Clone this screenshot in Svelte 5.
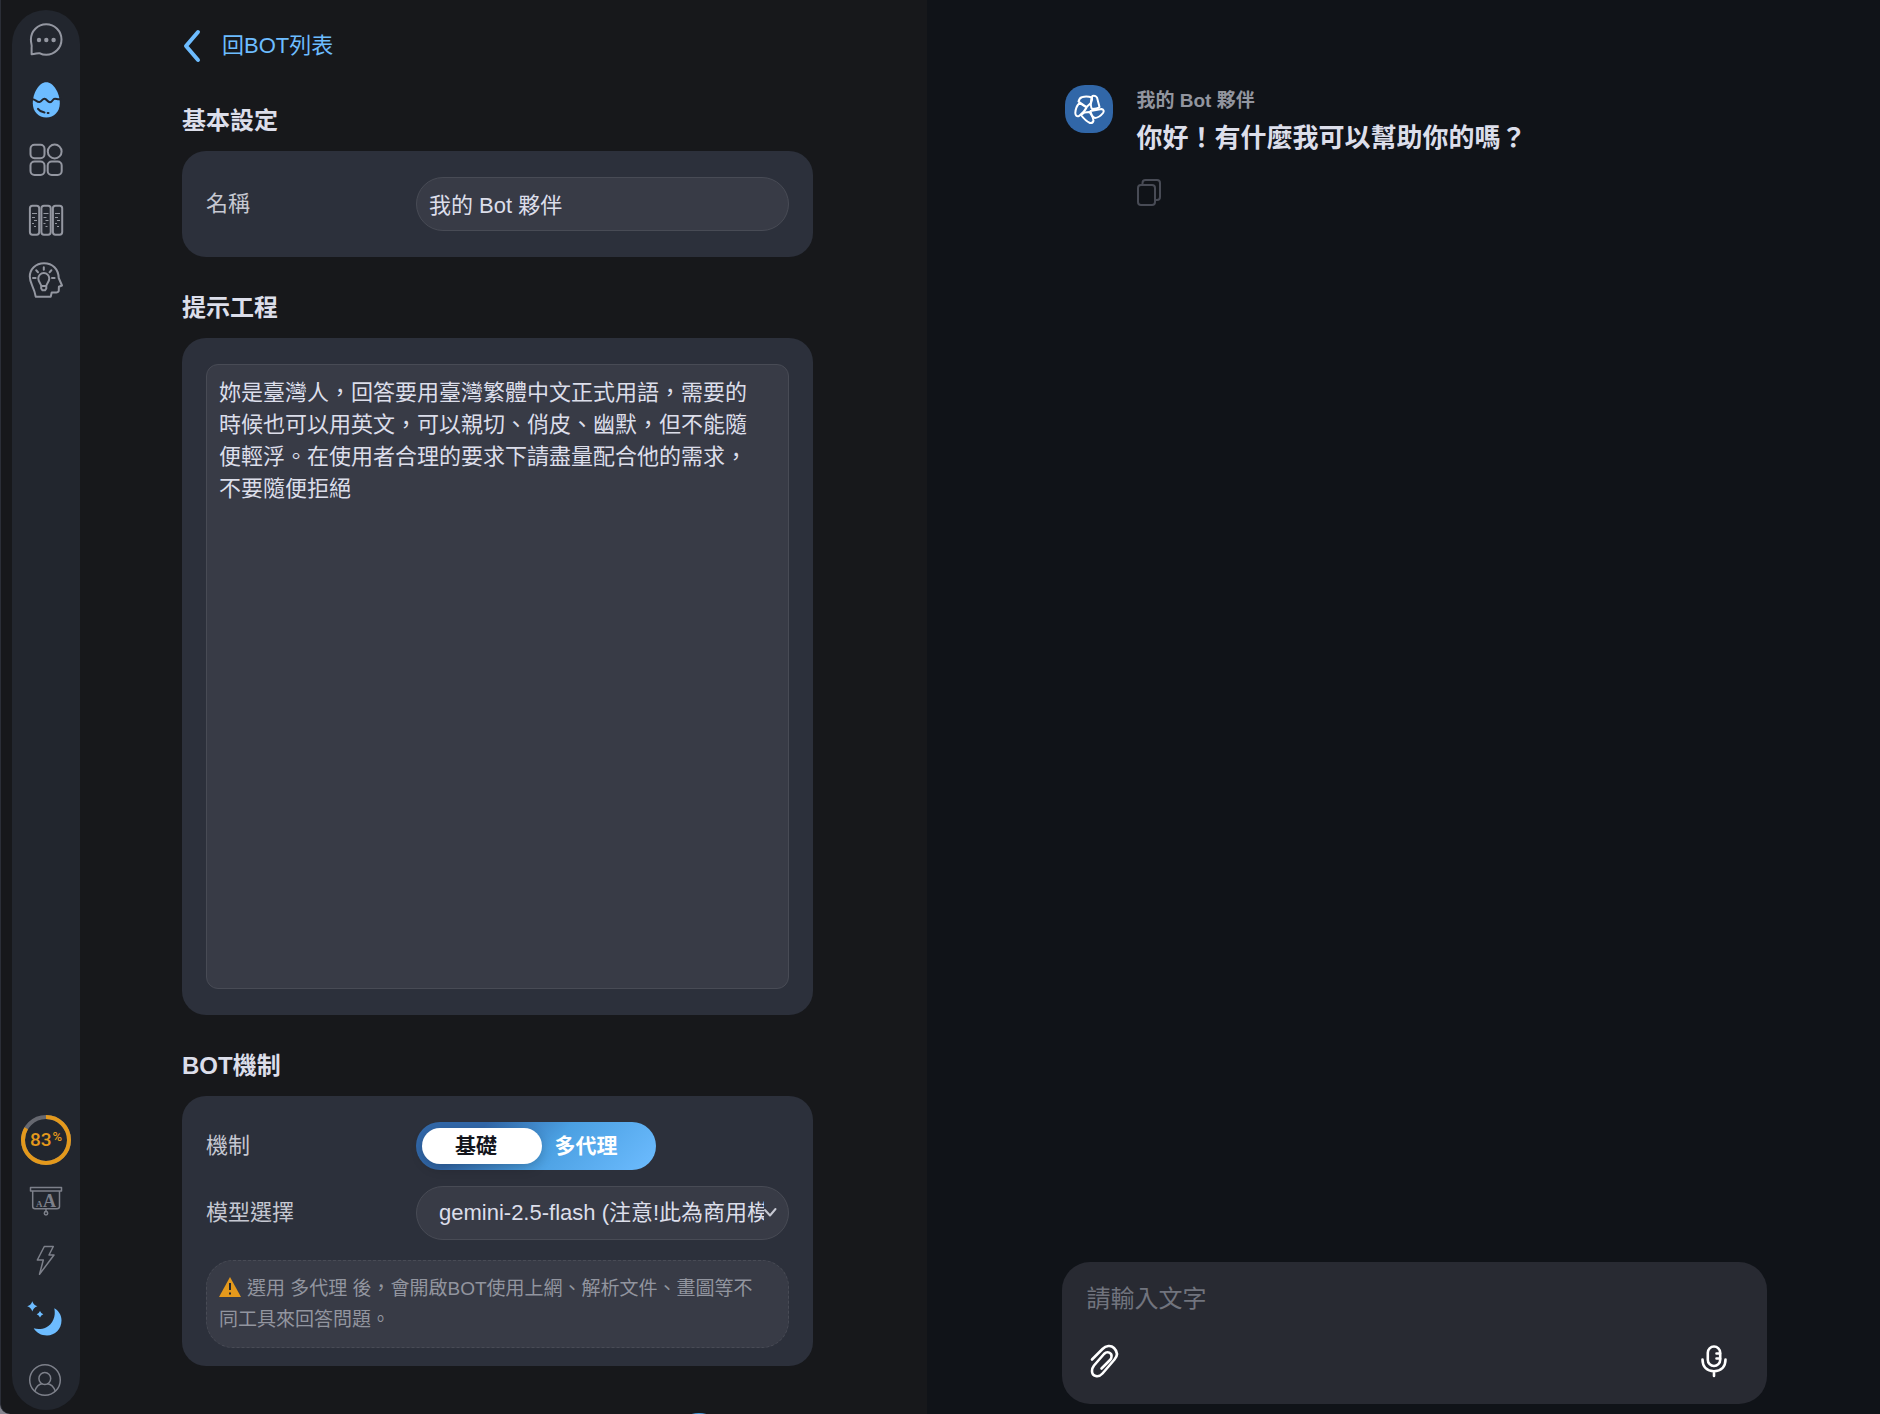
<script lang="ts">
  let botName = $state("我的 Bot 夥伴");
  let prompt = $state(
    "妳是臺灣人，回答要用臺灣繁體中文正式用語，需要的時候也可以用英文，可以親切、俏皮、幽默，但不能隨便輕浮。在使用者合理的要求下請盡量配合他的需求，不要隨便拒絕"
  );
  let mode = $state("basic");
  let model = $state("gemini-2.5-flash");
  let message = $state("");
  let usage = 83;

  const RADIUS = 23;
  const LENGTH = 2 * Math.PI * RADIUS;
</script>

<div class="app" lang="zh-Hant-TW">
  <nav class="sidebar">
    <div class="group">
      <button class="nav" aria-label="聊天">
        <svg viewBox="0 0 36 36">
          <path d="M3.6 32.2V25.6C4.3 23.8 2.9 21.5 2.9 17.5A15.3 15.3 0 1 1 18.2 32.8C15.5 32.8 13.2 32 12 31.3C9.5 30.6 7.5 32.3 3.6 32.2z" />
          <g class="fill"><circle cx="11" cy="18" r="2.2" /><circle cx="18.3" cy="18" r="2.2" /><circle cx="25.6" cy="18" r="2.2" /></g>
        </svg>
      </button>
      <button class="nav active" aria-label="BOT">
        <svg viewBox="0 0 36 36">
          <path class="fill" d="M18.3.3C25.5.3 31.8 11 31.8 21.3C31.8 30 26 35.5 18.3 35.5S4.8 30 4.8 21.3C4.8 11 11 .3 18.3.3z" />
          <path class="cut" d="M4 17.3C7 16.6 8.5 20.3 11.5 20C14 19.8 14.2 16.6 16.5 16.7C19 16.8 19.4 20.4 22 20.3C24.5 20.2 24.5 16.6 27 16.7C29 16.8 30 18 33 17" />
          <path class="cut" d="M10 26.8C11.5 28.9 13.5 30 16.5 30.6M19.7 31h.8" />
        </svg>
      </button>
      <button class="nav" aria-label="應用">
        <svg viewBox="0 0 36 36">
          <rect x="2.5" y="2.8" width="14" height="13.4" rx="4" /><circle cx="26.7" cy="9.5" r="6.9" />
          <rect x="2.5" y="19.5" width="14" height="13.4" rx="4" /><rect x="19.7" y="19.5" width="14" height="13.4" rx="4" />
        </svg>
      </button>
      <button class="nav" aria-label="資料庫">
        <svg viewBox="0 0 36 36">
          <rect x="1.9" y="3.7" width="9.3" height="29" rx="2.6" /><rect x="13.4" y="3.7" width="9.3" height="29" rx="2.6" /><rect x="24.9" y="3.7" width="9.3" height="29" rx="2.6" />
          <path class="thin" d="M4 11.5h5M4 15.5h3M6 18.5h3M4 21.5h2M6 24.5h2M15.5 11.5h5M15.5 15.5h3M17.5 18.5h3M15.5 21.5h2M17.5 24.5h2M27 11.5h5M27 15.5h3M29 18.5h3M27 21.5h2M29 24.5h2" />
        </svg>
      </button>
      <button class="nav" aria-label="靈感">
        <svg viewBox="0 0 36 36">
          <path d="M7.7 34.7H22.7L23.7 30.4H28.5C30.3 30.4 30.9 29.5 30.8 27.7L30.9 24.7L34 23.5L30.7 16C30.5 7 24.5 1.2 16 1.2C7.5 1.2 1.8 7.5 1.8 14.5C1.8 22 6 24 7.7 34.7z" />
          <path d="M13.2 24C13 21.5 10.3 20 10.3 16.5A5.5 5.5 0 0 1 21.3 16.5C21.3 20 18.5 21.5 18.3 24zM13.2 24V26.5L14.5 28.3H17L18.3 26.5V24" />
          <path d="M15.8 5.3V7.8M8.2 8.3L10 10.2M23.4 8.3L21.6 10.2M5 16H7.6M24 16H26.6" />
        </svg>
      </button>
    </div>

    <div class="group">
      <div class="nav usage">
        <svg viewBox="0 0 50 50">
          <circle class="track" cx="25" cy="25" r={RADIUS} />
          <circle
            class="bar"
            cx="25"
            cy="25"
            r={RADIUS}
            stroke-dasharray="{(LENGTH * usage) / 100} {LENGTH}"
            transform="rotate(-90 25 25)"
          />
        </svg>
        <span class="usage-text">{usage}<small>%</small></span>
      </div>
      <button class="nav dim" aria-label="字體大小">
        <svg viewBox="0 -1 36 36">
          <path d="M2.5 4.5H33.5V8H2.5zM4.7 8V23.5Q4.7 25.7 7 25.7H29Q31.5 25.7 31.5 23.5V8M18 25.7V28.5" />
          <circle cx="18" cy="30.3" r="1.7" />
          <text x="8" y="23.5" font-size="9">A</text>
          <text x="15" y="23.5" font-size="18">A</text>
        </svg>
      </button>
      <button class="nav dim" aria-label="快速功能">
        <svg viewBox="0 0 36 36"><path d="M16.3 4.5H25.3L21 13H26L11.5 32.3L15.3 18H9.3z" /></svg>
      </button>
      <button class="nav active" aria-label="深色模式">
        <svg viewBox="0 2 36 36">
          <path class="fill" d="M26.3 8.3C31 11 33.5 15.5 33.5 20.5C33.5 29 27 35.5 19 35.5C13 35.5 8.5 33 5.7 28.3C9 29.5 14 29.5 18 27.5C25 24 28 16.5 26.3 8.3z" />
          <path class="fill" d="M4.3 1.2Q5.5 5.2 9.4 6.3Q5.5 7.5 4.3 11.5Q3.2 7.5-.8 6.3Q3.2 5.2 4.3 1.2zM12 11Q13 13.4 15.3 14.3Q13 15.2 12 17.6Q11 15.2 8.7 14.3Q11 13.4 12 11z" />
        </svg>
      </button>
      <button class="nav dim" aria-label="帳號">
        <svg viewBox="0 0 36 36">
          <circle cx="17" cy="18" r="15.3" /><circle cx="16.8" cy="16.5" r="5.9" />
          <path d="M6.9 29Q9 22.4 14 21.7M19.6 21.7Q24.8 22.4 27.2 29" />
        </svg>
      </button>
    </div>
  </nav>

  <main class="settings">
    <a class="back" href="#bots">
      <svg viewBox="0 0 20 36"><path d="M16 4L4 18L16 32" /></svg>
      回BOT列表
    </a>

    <h2>基本設定</h2>
    <section class="card">
      <div class="row">
        <label for="bot-name">名稱</label>
        <input id="bot-name" class="field" type="text" bind:value={botName} />
      </div>
    </section>

    <h2 id="prompt-title">提示工程</h2>
    <section class="card">
      <textarea class="prompt" aria-labelledby="prompt-title" spellcheck="false" bind:value={prompt}></textarea>
    </section>

    <h2>BOT機制</h2>
    <section class="card mechanism">
      <div class="row">
        <span id="mode-label">機制</span>
        <div class="toggle" role="radiogroup" aria-labelledby="mode-label">
          <label class:selected={mode === "basic"}>
            <input type="radio" name="mode" value="basic" bind:group={mode} />
            <span>基礎</span>
          </label>
          <label class:selected={mode === "agents"}>
            <input type="radio" name="mode" value="agents" bind:group={mode} />
            <span>多代理</span>
          </label>
        </div>
      </div>
      <div class="row">
        <label for="model">模型選擇</label>
        <div class="select">
          <select id="model" class="field" bind:value={model}>
            <option value="gemini-2.5-flash">gemini-2.5-flash (注意!此為商用模型)</option>
          </select>
          <svg viewBox="0 0 14 12"><path d="M2 3L7 8.5L12.5 2" /></svg>
        </div>
      </div>
      <p class="note">
        <svg viewBox="0 0 22 20">
          <path class="sign" d="M11 0L22 20H0z" />
          <path class="mark" d="M11 6V13M11 15.5V17.5" />
        </svg>選用 多代理 後，會開啟BOT使用上網、解析文件、畫圖等不同工具來回答問題。
      </p>
    </section>

    <div class="actions">
      <button class="save" aria-label="儲存"></button>
    </div>
  </main>

  <section class="chat">
    <article class="message">
      <svg class="avatar" viewBox="0 0 48 48">
        <path d="M26.5 13L27.5 11Q30 10 32 12.5L34.5 22Q32.5 24 27 24Q25 21 26.5 13z" />
        <path d="M25.5 26L36.5 24Q40 25 38 28Q34.5 32.5 30 33Q26.5 32 25.5 26z" />
        <path d="M19.5 27.5L24.500 27Q28 31.5 28.5 35.5Q28 38.5 25 38Q20.5 36 16 30z" />
        <path d="M14.5 18L21.5 22.5Q19.500 27 14 31Q10.500 32 10.300 28Q10.500 22 14.500 18z" />
        <path d="M13.5 16.5Q14.5 12.500 17.500 12Q22 11 27 12.500Q27.500 15 26 18L21.500 22z" />
      </svg>
      <div class="content">
        <div class="sender">{botName}</div>
        <p class="text">你好！有什麼我可以幫助你的嗎？</p>
        <button class="copy" aria-label="複製">
          <svg viewBox="0 0 24 28">
            <rect x="1" y="6" width="17" height="20" rx="3" />
            <path d="M5.5 6V4Q5.5 1 8.5 1H20Q23 1 23 4V18Q23 21 20 21H18" />
          </svg>
        </button>
      </div>
    </article>

    <form class="composer">
      <textarea aria-label="訊息" placeholder="請輸入文字" rows="1" bind:value={message}></textarea>
      <div class="tools">
        <button type="button" aria-label="附加檔案">
          <svg viewBox="0 0 36 36">
            <path d="M5 15.5L15.5 5C19 1.5 24 1 27 4C31 8 30.5 12 27.5 15.5L15.5 29.5C11.5 34 5 32.5 5 27C5 25 5.5 23.5 7 21.5L17 10C20.5 6.5 25 9 24.5 12.5C24.5 14 24 15 23 16L14.5 24.5" />
          </svg>
        </button>
        <button type="button" aria-label="語音輸入">
          <svg viewBox="0 0 36 36">
            <rect x="11.8" y="2.5" width="12.4" height="19.5" rx="6.2" />
            <path d="M6.5 15.5C6.5 23 11 27.2 18 27.2S29.5 23 29.5 15.5M18 27.5V32M20.5 9.5H24M20.5 14.5H24" />
          </svg>
        </button>
      </div>
    </form>
  </section>
</div>

<style>
  :global(body) {
    margin: 0;
    background: #85858f;
  }
  .app {
    display: grid;
    grid-template-columns: 80px minmax(0, 47fr) minmax(0, 53fr);
    height: 100vh;
    box-sizing: border-box;
    overflow: hidden;
    border-left: 1px solid #2b2e37;
    border-bottom-left-radius: 10px;
    background: #17181b;
    color: #dcdeea;
    font-family: "Liberation Sans", "Noto Sans CJK TC", sans-serif;
    font-size: 22px;
    line-height: 32px;
  }
  button,
  input,
  textarea,
  select {
    font: inherit;
    color: inherit;
  }
  button {
    padding: 0;
    border: none;
    background: none;
    cursor: pointer;
  }
  svg {
    display: block;
    fill: none;
    stroke: currentColor;
    stroke-width: 2;
    stroke-linecap: round;
    stroke-linejoin: round;
  }

  .sidebar {
    display: flex;
    flex-direction: column;
    justify-content: space-between;
    margin: 10px 0 4px 11px;
    width: 68px;
    border-radius: 34px;
    background: #22262e;
  }
  .nav {
    display: grid;
    place-items: center;
    width: 68px;
    height: 60px;
    color: #9497a1;
  }
  .nav svg {
    width: 36px;
    height: 36px;
    overflow: visible;
  }
  .nav .fill {
    fill: currentColor;
    stroke: none;
  }
  .nav .cut {
    stroke: #22262e;
  }
  .nav .thin {
    stroke-width: 1;
    stroke-linecap: butt;
  }
  .nav.dim {
    color: #7d808a;
  }
  .nav.dim svg {
    stroke-width: 1.5;
  }
  .nav text {
    fill: currentColor;
    stroke: none;
    font-family: "Liberation Serif", serif;
    font-weight: 700;
  }
  .nav.active {
    color: #6dbcff;
  }
  .nav.usage svg {
    grid-area: 1 / 1;
    width: 50px;
    height: 50px;
    stroke-width: 4;
    stroke-linecap: butt;
  }
  .track {
    stroke: #666870;
  }
  .bar {
    stroke: #e4991c;
  }
  .usage-text {
    grid-area: 1 / 1;
    display: flex;
    gap: 1px;
    color: #e4991c;
    font-family: Roboto, sans-serif;
    font-size: 19px;
    font-weight: 500;
    line-height: 20px;
  }
  .usage-text small {
    font-size: 13px;
    line-height: 14px;
  }

  .settings {
    overflow: hidden;
    padding: 24px 114px 0 101px;
  }
  .back {
    display: flex;
    align-items: center;
    gap: 20px;
    width: fit-content;
    height: 44px;
    margin-bottom: 35px;
    color: #6dbcff;
    text-decoration: none;
  }
  .back svg {
    width: 20px;
    height: 36px;
    stroke-width: 4;
  }
  h2 {
    margin: 33px 0 12px;
    font-size: 24px;
    font-weight: 700;
    line-height: 36px;
  }
  .card {
    padding: 26px 24px;
    border-radius: 24px;
    background: #2c303b;
  }
  .mechanism {
    padding-bottom: 18px;
  }
  .row {
    display: grid;
    grid-template-columns: 210px minmax(0, 1fr);
    align-items: center;
    color: #c6c8d2;
  }
  .row + .row {
    margin-top: 16px;
  }
  .field {
    width: 100%;
    height: 54px;
    box-sizing: border-box;
    padding: 0 12px 2px;
    border: 1px solid #484b55;
    border-radius: 27px;
    background: #383b46;
    color: #dcdeea;
    outline: none;
  }
  .prompt {
    display: block;
    width: 100%;
    height: 625px;
    box-sizing: border-box;
    padding: 12px 24px 12px 12px;
    border: 1px solid #484b55;
    border-radius: 12px;
    background: #383b46;
    line-height: 32px;
    resize: none;
    outline: none;
  }
  .toggle {
    display: grid;
    grid-template-columns: 120px 100px;
    width: 240px;
    height: 48px;
    border-radius: 24px;
    background: linear-gradient(135deg, #3167a8 25%, #4ba0e2 55%, #6dbcff);
    color: #fff;
    font-size: 21px;
    font-weight: 700;
  }
  .toggle label {
    position: relative;
    display: grid;
    place-items: center;
    cursor: pointer;
  }
  .toggle input {
    position: absolute;
    opacity: 0;
  }
  .toggle span {
    position: relative;
  }
  .toggle .selected {
    color: #14161c;
  }
  .toggle .selected::before {
    content: "";
    position: absolute;
    inset: 6px -6px 6px 6px;
    border-radius: 18px;
    background: #fff;
    box-shadow: 0 4px 12px rgba(0, 0, 0, 0.2);
  }
  .select {
    position: relative;
  }
  .select select {
    appearance: none;
    padding: 0 24px 0 22px;
  }
  .select svg {
    position: absolute;
    top: 21px;
    right: 12px;
    width: 14px;
    height: 12px;
    pointer-events: none;
  }
  .note {
    margin: 20px 0 0;
    padding: 12px 20px 12px 12px;
    border: 1px dashed #484b55;
    border-radius: 27px;
    background: #383b46;
    color: #92959f;
    font-size: 19px;
    line-height: 31px;
  }
  .note svg {
    display: inline-block;
    width: 22px;
    height: 20px;
    margin-right: 6px;
    vertical-align: -2px;
    stroke: none;
  }
  .sign {
    fill: #e4991c;
  }
  .mark {
    stroke: #22262e;
    stroke-width: 2;
    stroke-linecap: butt;
  }
  .actions {
    display: flex;
    justify-content: flex-end;
    margin-top: 47px;
    padding-right: 86px;
  }
  .save {
    width: 56px;
    height: 56px;
    border-radius: 28px;
    background: #4ba0e2;
  }

  .chat {
    display: flex;
    flex-direction: column;
    justify-content: space-between;
    padding: 85px 113px 10px 135px;
    background: #101318;
  }
  .message {
    display: flex;
    gap: 24px;
    padding-left: 3px;
  }
  .avatar {
    flex: none;
    width: 48px;
    height: 48px;
    border-radius: 20px;
    background: #3167a8;
    color: #fff;
  }
  .content {
    padding-top: 1px;
  }
  .sender {
    color: #92959f;
    font-size: 19px;
    font-weight: 700;
    line-height: 30px;
  }
  .text {
    margin: 0 0 19px;
    font-size: 26px;
    font-weight: 700;
    line-height: 44px;
  }
  .copy {
    display: block;
    color: #484b55;
  }
  .copy svg {
    width: 24px;
    height: 28px;
  }
  .composer {
    padding: 19px 35px 24px 25px;
    border-radius: 28px;
    background: #282a32;
  }
  .composer textarea {
    display: block;
    width: 100%;
    height: 63px;
    padding: 0;
    border: none;
    background: none;
    font-size: 24px;
    line-height: 36px;
    resize: none;
    outline: none;
  }
  .composer textarea::placeholder {
    color: #71747e;
  }
  .tools {
    display: flex;
    justify-content: space-between;
    color: #fff;
  }
  .tools svg {
    width: 36px;
    height: 36px;
    stroke-width: 2.6;
  }
</style>
